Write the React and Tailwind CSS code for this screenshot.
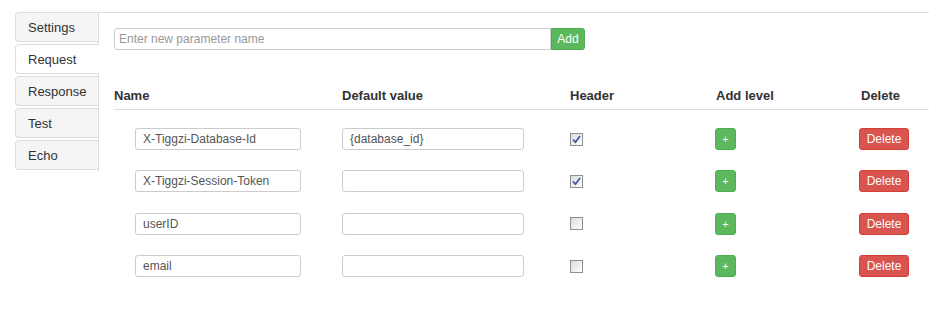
import React from "react";

const tabs = ["Settings", "Request", "Response", "Test", "Echo"];
const rows = [
  { name: "X-Tiggzi-Database-Id", value: "{database_id}", header: true },
  { name: "X-Tiggzi-Session-Token", value: "", header: true },
  { name: "userID", value: "", header: false },
  { name: "email", value: "", header: false },
];

function Checkbox({ checked }) {
  return (
    <span className="relative flex h-[13px] w-[13px] items-center justify-center border border-[#8e8f8f] bg-gradient-to-br from-[#dcdcdc] to-[#ffffff]">
      {checked && (
        <svg width="9" height="9" viewBox="0 0 9 9" className="absolute">
          <path d="M1 4.5 L3.5 7.2 L8 1" stroke="#3b58a6" strokeWidth="1.8" fill="none" />
        </svg>
      )}
    </span>
  );
}

export default function App() {
  return (
    <div
      className="flex bg-white pl-[15px] pt-[12px] text-[13px] text-[#333]"
      style={{ fontFamily: '"Liberation Sans", Arial, sans-serif', minHeight: 312 }}
    >
      <div className="flex h-[160px] w-[84px] shrink-0 flex-col border-r border-[#dddddd]">
        {tabs.map((t) => {
          const active = t === "Request";
          return (
            <div
              key={t}
              className={
                "mb-[2px] flex h-[30px] items-center rounded-l-[4px] border-y border-l border-[#dddddd] pl-[12px] pt-[1px] text-[13px] " +
                (active ? "relative -mr-px bg-white text-[#333]" : "bg-[#f5f5f5] text-[#333]")
              }
            >
              {t}
            </div>
          );
        })}
      </div>
      <div className="flex-1 border-t border-[#dddddd] pl-[15px] pt-[15px]">
        <div className="flex h-[22px]">
          <div className="flex w-[437px] items-center rounded-l-[3px] border border-[#cccccc] pl-[4px] text-[12px] text-[#999]">
            Enter new parameter name
          </div>
          <div className="flex w-[34px] items-center justify-center rounded-r-[3px] border border-[#4cae4c] bg-[#5cb85c] text-[12px] text-white">
            Add
          </div>
        </div>
        <div className="mt-[36px] flex h-[24px] items-start border-b border-[#dddddd] font-bold">
          <div className="w-[228px]">Name</div>
          <div className="w-[228px]">Default value</div>
          <div className="w-[146px]">Header</div>
          <div className="w-[145px]">Add level</div>
          <div>Delete</div>
        </div>
        <div className="pt-[18px]">
          {rows.map((r, i) => (
            <div key={i} className="flex h-[42.4px] items-start">
              <div className="w-[228px] pl-[21px]">
                <div className="flex h-[22px] w-[166px] items-center rounded-[3px] border border-[#cccccc] pl-[7px] text-[12px] text-[#555]">
                  {r.name}
                </div>
              </div>
              <div className="w-[228px]">
                <div className="flex h-[22px] w-[182px] items-center rounded-[3px] border border-[#cccccc] pl-[7px] text-[12px] text-[#555]">
                  {r.value}
                </div>
              </div>
              <div className="flex h-[22px] w-[146px] items-center">
                <Checkbox checked={r.header} />
              </div>
              <div className="w-[145px]">
                <div className="-ml-px flex h-[22px] w-[21px] items-center justify-center rounded-[3px] border border-[#4cae4c] bg-[#5cb85c] text-[11px] text-white">
                  +
                </div>
              </div>
              <div>
                <div className="-ml-[2px] flex h-[22px] w-[50px] items-center justify-center rounded-[3px] border border-[#d43f3a] bg-[#d9534f] text-[12px] text-white">
                  Delete
                </div>
              </div>
            </div>
          ))}
        </div>
      </div>
    </div>
  );
}
